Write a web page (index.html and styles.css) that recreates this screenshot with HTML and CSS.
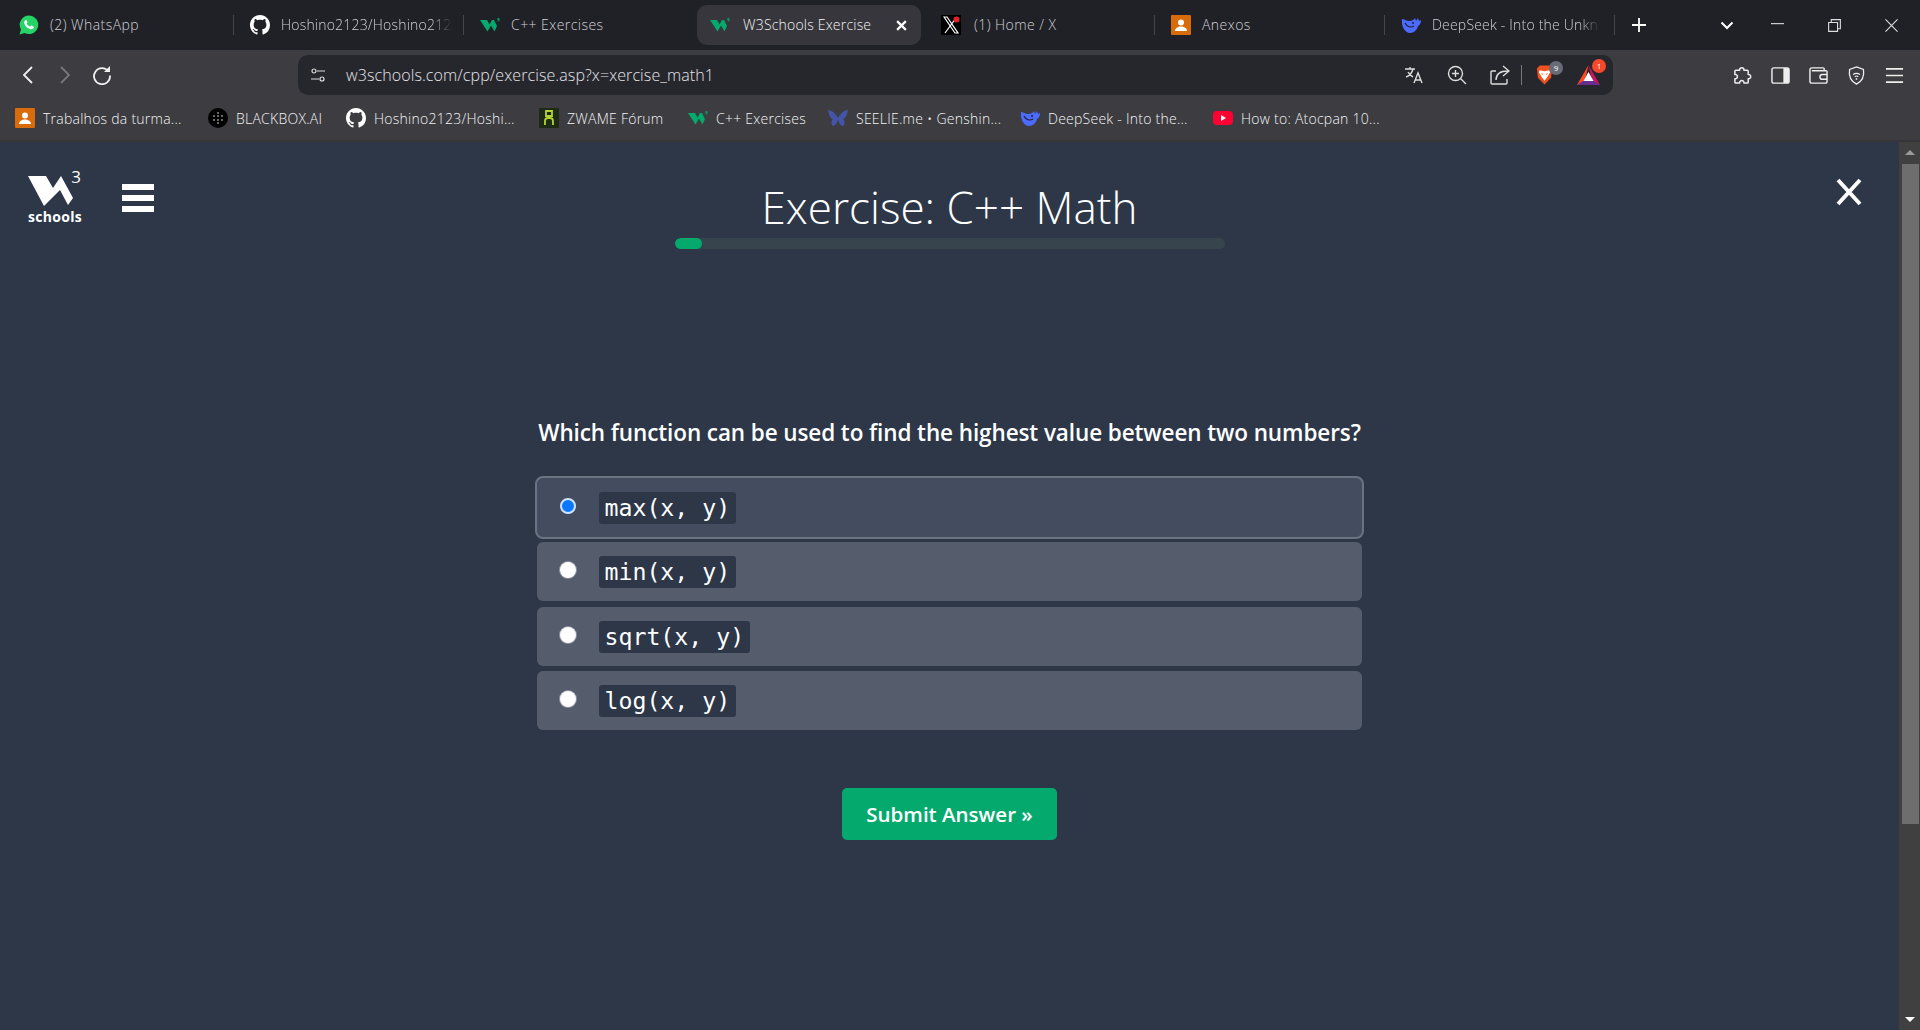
FILE: index.html
```html
<!DOCTYPE html>
<html lang="en">
<head>
<meta charset="UTF-8" />
<title>W3Schools Exercise</title>
<link rel="stylesheet" href="styles.css">
</head>
<body>
<svg class="defs" width="0" height="0">
  <symbol id="i-github" viewBox="0 0 16 16"><path fill="#fff" d="M8 0C3.58 0 0 3.58 0 8c0 3.54 2.29 6.53 5.47 7.59.4.07.55-.17.55-.38 0-.19-.01-.82-.01-1.49-2.01.37-2.53-.49-2.69-.94-.09-.23-.48-.94-.82-1.13-.28-.15-.68-.52-.01-.53.63-.01 1.08.58 1.23.82.72 1.21 1.87.87 2.33.66.07-.52.28-.87.51-1.07-1.78-.2-3.64-.89-3.64-3.95 0-.87.31-1.59.82-2.15-.08-.2-.36-1.02.08-2.12 0 0 .67-.21 2.2.82.64-.18 1.32-.27 2-.27s1.36.09 2 .27c1.53-1.04 2.2-.82 2.2-.82.44 1.1.16 1.92.08 2.12.51.56.82 1.27.82 2.15 0 3.07-1.87 3.75-3.65 3.95.29.25.54.73.54 1.48 0 1.07-.01 1.93-.01 2.2 0 .21.15.46.55.38A8.01 8.01 0 0 0 16 8c0-4.42-3.58-8-8-8z"/></symbol>
  <symbol id="i-w3" viewBox="0 0 20 16"><path fill="#04aa6d" d="M0 3h7l2.5 4.500L12 3h2l3 6-2.500 5.500-3.500-6-3.500 6z"/><path fill="#04aa6d" d="M17.500 1h2v.8h-1.200v.5h1.200v1.900h-2v-.7h1.200v-.5h-1.200z"/></symbol>
  <symbol id="i-person" viewBox="0 0 20 20"><rect width="20" height="20" rx="1" fill="#d96c0a"/><circle cx="10" cy="7.500" r="3" fill="#fff"/><path fill="#fff" d="M4 16c0-3 3-4.500 6-4.500s6 1.500 6 4.500z"/></symbol>
  <symbol id="i-whale" viewBox="0 0 20 20"><path fill="#4d6bfe" d="M1 4c2 0 4 2 7 2 3 0 5-1 6-3l1 3 2-3 1 3 2-1c0 3-1 5-3 6-1 4-4 7-8 7C4 18 0 11 1 4z"/><path fill="none" stroke="#202127" stroke-width="1.200" d="M4 8c2 4 6 5 9 3"/><circle cx="12" cy="8" r="1" fill="#202127"/></symbol>
</svg>

<div class="tab-strip">
  <div class="tab first">
    <svg class="fav" viewBox="0 0 20 20"><path fill="#25d366" d="M10 .5a9.300 9.300 0 0 0-8 14L.5 19.500l5.200-1.400A9.300 9.300 0 1 0 10 .5z"/><path fill="#fff" d="M7 5c-.5 0-1 .3-1.300.8C5 7 5 8.500 6 10c1.300 2 3.300 3.700 5.500 4.200 1.500.3 2.800-.5 3.200-1.500.2-.5.1-1-.3-1.200l-1.800-.9c-.4-.2-.7 0-.9.300l-.6.800c-1.500-.5-2.800-1.700-3.500-3.100l.6-.7c.2-.3.200-.6.100-.9l-.7-1.700C7.500 5.100 7.300 5 7 5z"/></svg>
    <span class="tab-text">(2) WhatsApp</span>
  </div>
  <div class="tab sep">
    <svg class="fav"><use href="#i-github"/></svg>
    <span class="tab-text fade">Hoshino2123/Hoshino212</span>
  </div>
  <div class="tab sep wide">
    <svg class="fav"><use href="#i-w3"/></svg>
    <span class="tab-text">C++ Exercises</span>
  </div>
  <div class="tab active">
    <svg class="fav"><use href="#i-w3"/></svg>
    <span class="tab-text">W3Schools Exercise</span>
    <svg class="tab-close" viewBox="0 0 10 10"><path d="M1 1l8 8M9 1L1 9" stroke="#fff" stroke-width="2"/></svg>
  </div>
  <div class="tab after-active">
    <svg class="fav" viewBox="0 0 20 20"><rect width="20" height="20" fill="#000"/><path d="M3 2l11 16h3L6 2zM15 3L4 18" stroke="#fff" stroke-width="1.200" fill="none"/><circle cx="15.500" cy="4.500" r="3" fill="#e8202a"/></svg>
    <span class="tab-text">(1) Home / X</span>
  </div>
  <div class="tab sep">
    <svg class="fav"><use href="#i-person"/></svg>
    <span class="tab-text">Anexos</span>
  </div>
  <div class="tab sep">
    <svg class="fav"><use href="#i-whale"/></svg>
    <span class="tab-text fade">DeepSeek - Into the Unkn</span>
  </div>
  <div class="strip-end">
    <svg class="new-tab" viewBox="0 0 14 14"><path d="M7 0v14M0 7h14" stroke="#fff" stroke-width="1.800"/></svg>
    <svg class="tab-list" viewBox="0 0 14 9"><path d="M1.500 1.500L7 7l5.500-5.500" stroke="#fff" stroke-width="2" fill="none"/></svg>
    <svg class="win-btn minimize" viewBox="0 0 14 14"><path d="M0 5h14" stroke="#ddd" stroke-width="1.200"/></svg>
    <svg class="win-btn" viewBox="0 0 14 14"><path d="M.7 3.700h9.600v9.600H.7zM3.500 3.500V.7h9.800v9.800h-3" stroke="#ddd" stroke-width="1.200" fill="none"/></svg>
    <svg class="win-btn" viewBox="0 0 14 14"><path d="M.5.500l13 13M13.500.5l-13 13" stroke="#ddd" stroke-width="1.200"/></svg>
  </div>
</div>

<div class="toolbar">
  <svg class="nav-btn" viewBox="0 0 12 20"><path d="M10 2L2 10l8 8" stroke="#f0f0f0" stroke-width="1.800" fill="none"/></svg>
  <svg class="nav-btn" viewBox="0 0 12 20"><path d="M2 2l8 8-8 8" stroke="#77777c" stroke-width="1.800" fill="none"/></svg>
  <svg class="nav-btn reload" viewBox="0 0 20 20"><path d="M16.500 6.500A8 8 0 1 0 18 10.500" stroke="#f0f0f0" stroke-width="1.800" fill="none"/><path d="M12 7h6V1z" fill="#f0f0f0"/></svg>
  <div class="url-bar">
    <svg class="site-info" viewBox="0 0 16 14"><g stroke="#ddd" stroke-width="1.200" fill="none"><circle cx="4" cy="3" r="2"/><path d="M7 3h8M1 11h8"/><circle cx="12" cy="11" r="2"/></g></svg>
    <span class="url">w3schools.com/cpp/exercise.asp?x=xercise_math1</span>
    <div class="url-icons">
      <svg class="url-ic" viewBox="0 0 20 20"><path d="M1 4h10M6 2v2M9 4c-1 4-4 7-7 8M4 7c1 2 3 4 5 5M10 18l4-10 4 10M11.500 15h5" stroke="#ddd" stroke-width="1.400" fill="none"/></svg>
      <svg class="url-ic" viewBox="0 0 20 20"><circle cx="8.500" cy="8.500" r="7" stroke="#ddd" stroke-width="1.400" fill="none"/><path d="M8.500 5v7M5 8.500h7M13.500 13.500L19 19" stroke="#ddd" stroke-width="1.400"/></svg>
      <svg class="url-ic" viewBox="0 0 20 20"><path d="M6 6H2a1 1 0 0 0-1 1v11a1 1 0 0 0 1 1h14a1 1 0 0 0 1-1v-4M6 15c0-6 4-9 12-9M13 1l6 5-6 5" stroke="#ddd" stroke-width="1.400" fill="none"/></svg>
      <span class="url-sep"></span>
      <div class="shield">
        <svg viewBox="0 0 18 22"><path fill="#f1501f" d="M4 1h10l3 3-1 10-7 7-7-7L1 4z"/><path fill="#fff" d="M4 6l5 1 5-1 1 2-3 5-3 4-3-4-3-5z"/><path fill="#f1501f" d="M5.500 9l2 1-1 1zM12.500 9l-2 1 1 1z"/></svg>
        <span class="badge badge-grey">9</span>
      </div>
      <div class="shield bat">
        <svg viewBox="0 0 23 20"><path fill="#ff4724" d="M11.500 0L0 20h7z"/><path fill="#c8155e" d="M11.500 0L23 20h-7z"/><path fill="#662d91" d="M0 20h23l-6-4H6z"/><path fill="#fff" d="M11.500 7l5 9h-10z"/></svg>
        <span class="badge badge-red">1</span>
      </div>
    </div>
  </div>
  <div class="tools">
    <svg class="tool" viewBox="0 0 20 20"><path d="M7 4.500C6.500 1 12 1 11.500 4.500h3.500a1 1 0 0 1 1 1V9c3.500-.5 3.500 5 0 4.500V17a1 1 0 0 1-1 1h-3.500c.5-3.500-5-3.500-4.500 0H3a1 1 0 0 1-1-1v-3.500c3.500.5 3.500-5 0-4.500V5.500a1 1 0 0 1 1-1z" stroke="#eee" stroke-width="1.600" fill="none" stroke-linejoin="round"/></svg>
    <svg class="tool" viewBox="0 0 20 20"><rect x="1" y="2" width="18" height="16" rx="2" stroke="#eee" stroke-width="1.500" fill="none"/><path d="M13 2h5a1 1 0 0 1 1 1v14a1 1 0 0 1-1 1h-5z" fill="#eee"/></svg>
    <svg class="tool" viewBox="0 0 20 20"><path d="M16 5V3a1 1 0 0 0-1-1H3a2 2 0 0 0-2 2v12a2 2 0 0 0 2 2h14a2 2 0 0 0 2-2V6a1 1 0 0 0-1-1H3M19 9h-5a2 2 0 0 0 0 5h5" stroke="#eee" stroke-width="1.500" fill="none"/></svg>
    <svg class="tool" viewBox="0 0 20 22"><path d="M10 1l8 3c1 6 0 13-8 17C2 17 1 10 2 4z" stroke="#eee" stroke-width="1.500" fill="none"/><path d="M6 10c2-2 6-2 8 0M8 12.500c1-1 3-1 4 0" stroke="#eee" stroke-width="1.400" fill="none"/><circle cx="10" cy="15" r="1" fill="#eee"/></svg>
    <svg class="tool" viewBox="0 0 20 20"><path d="M1 3h18M1 10h18M1 17h18" stroke="#eee" stroke-width="1.800"/></svg>
  </div>
</div>

<div class="bookmarks">
  <div class="bm"><svg class="fav"><use href="#i-person"/></svg>Trabalhos da turma...</div>
  <div class="bm"><svg class="fav" viewBox="0 0 20 20"><circle cx="10" cy="10" r="10" fill="#000"/><g fill="#888"><circle cx="10" cy="5" r="1"/><circle cx="10" cy="8" r="1"/><circle cx="10" cy="12" r="1"/><circle cx="10" cy="15" r="1"/><circle cx="6" cy="8" r="1"/><circle cx="14" cy="8" r="1"/><circle cx="6" cy="12" r="1"/><circle cx="14" cy="12" r="1"/></g></svg>BLACKBOX.AI</div>
  <div class="bm"><svg class="fav"><use href="#i-github"/></svg>Hoshino2123/Hoshi...</div>
  <div class="bm"><svg class="fav" viewBox="0 0 20 20"><rect width="20" height="20" fill="#1d2a14"/><path d="M7 3h6v5H7zM10 8v2M6 17v-4a3 3 0 0 1 3-3h2a3 3 0 0 1 3 3v4" stroke="#b5d334" stroke-width="1.800" fill="none"/></svg>ZWAME Fórum</div>
  <div class="bm"><svg class="fav"><use href="#i-w3"/></svg>C++ Exercises</div>
  <div class="bm"><svg class="fav" viewBox="0 0 20 20"><path fill="#4455a8" d="M0 2c4 0 8 4 10 8 2-4 6-8 10-8-1 5-2 8-5 9 2 1 2 6 0 7-2 0-4-3-5-6-1 3-3 6-5 6-2-1-2-6 0-7C2 10 1 7 0 2z"/></svg>SEELIE.me • Genshin...</div>
  <div class="bm"><svg class="fav"><use href="#i-whale"/></svg>DeepSeek - Into the...</div>
  <div class="bm"><svg class="fav" viewBox="0 0 20 20"><rect y="3" width="20" height="14" rx="4" fill="#ff0033"/><path d="M8 7l5 3-5 3z" fill="#fff"/></svg>How to: Atocpan 10...</div>
</div>

<div class="viewport">
  <main class="page">
    <header class="top">
      <div class="brand">
        <div class="logo">
          <svg class="logo-mark" viewBox="0 0 53 34"><path fill="#fff" d="M0 4h18l7 12 8-12 12 22-5 7-8-15-16 16z"/></svg>
          <span class="logo-three">3</span>
          <span class="logo-word">schools</span>
        </div>
        <div class="menu"><span></span><span></span><span></span></div>
      </div>
      <div class="heading">
        <h1>Exercise: C++ Math</h1>
        <div class="progress"><div class="progress-fill" style="width:5%"></div></div>
      </div>
      <svg class="close" viewBox="0 0 26 28"><path d="M2 2l22 24M24 2L2 26" stroke="#fff" stroke-width="4"/></svg>
    </header>

    <section class="quiz">
      <p class="question">Which function can be used to find the highest value between two numbers?</p>
      <div class="options">
        <label class="option selected"><span class="radio"></span><code>max(x, y)</code></label>
        <label class="option"><span class="radio"></span><code>min(x, y)</code></label>
        <label class="option"><span class="radio"></span><code>sqrt(x, y)</code></label>
        <label class="option"><span class="radio"></span><code>log(x, y)</code></label>
      </div>
      <button class="submit">Submit Answer »</button>
    </section>
  </main>
  <div class="scrollbar">
    <div class="arrow up"></div>
    <div class="thumb"></div>
    <div class="arrow down"></div>
  </div>
</div>
</body>
</html>
```
FILE: styles.css
```css
* {
  box-sizing: border-box;
}
html, body {
  height: 100%;
}
body {
  margin: 0;
  overflow: hidden;
  display: flex;
  flex-direction: column;
  font-family: "Open Sans", "Noto Sans", sans-serif;
  background-color: #2d3748;
  color: #fff;
}
.defs {
  position: absolute;
}
.fav {
  width: 20px;
  height: 20px;
  flex-shrink: 0;
}

/* tabs */
.tab-strip {
  height: 50px;
  background-color: #202127;
  display: flex;
  align-items: center;
}
.tab {
  position: relative;
  width: 230px;
  height: 40px;
  flex-shrink: 0;
  display: flex;
  align-items: center;
  gap: 11px;
  padding-left: 17px;
  font-size: 14px;
  font-weight: 300;
  letter-spacing: 0.45px;
  color: #d0d0d4;
  white-space: nowrap;
}
.tab.sep::before {
  content: "";
  position: absolute;
  left: 0;
  top: 10px;
  height: 20px;
  width: 1px;
  background-color: #45454b;
}
.tab.first {
  width: 233px;
  padding-left: 19px;
}
.tab.wide {
  width: 234px;
}
.tab.active {
  width: 224px;
  background-color: #36363c;
  border-radius: 10px;
  color: #f5f5f5;
  padding-left: 13px;
  gap: 13px;
  letter-spacing: 0.2px;
}
.tab.after-active {
  width: 233px;
  padding-left: 20px;
  gap: 13px;
}
.tab-text {
  flex: 1;
  padding-bottom: 1px;
}
.tab-text.fade {
  -webkit-mask-image: linear-gradient(to right, #000 88%, transparent 100%);
  margin-right: 14px;
  letter-spacing: 0.2px;
}
.tab-close {
  width: 11px;
  height: 11px;
  margin-right: 14px;
  flex-shrink: 0;
}
.strip-end {
  flex: 1;
  display: flex;
  align-items: center;
  border-left: 1px solid #45454b;
  height: 20px;
}
.new-tab {
  width: 14px;
  height: 14px;
  margin-left: 17px;
}
.tab-list {
  width: 14px;
  height: 9px;
  margin-left: 74px;
}
.win-btn {
  width: 13px;
  height: 13px;
  margin-left: 44px;
}
.win-btn.minimize {
  margin-left: 37px;
}

/* toolbar */
.toolbar {
  height: 45px;
  background-color: #3c3c41;
  display: flex;
  align-items: center;
  padding-top: 5px;
}
.nav-btn {
  width: 12px;
  height: 20px;
  margin-left: 22px;
}
.nav-btn + .nav-btn {
  margin-left: 25px;
}
.nav-btn.reload {
  width: 20px;
  margin-left: 21px;
}
.url-bar {
  width: 1315px;
  height: 40px;
  margin-left: 186px;
  background-color: #26272d;
  border-radius: 10px;
  display: flex;
  align-items: center;
  padding: 0 13px 0 12px;
}
.site-info {
  width: 16px;
  height: 14px;
}
.url {
  margin-left: 20px;
  font-size: 16px;
  font-weight: 300;
  color: #e4e4e8;
  letter-spacing: 0.1px;
}
.url-icons {
  margin-left: auto;
  display: flex;
  align-items: center;
}
.url-ic {
  width: 20px;
  height: 20px;
  margin-right: 23px;
}
.url-sep {
  width: 1px;
  height: 20px;
  background-color: #77777c;
  margin-left: -12px;
  margin-right: 14px;
}
.shield {
  position: relative;
  width: 17px;
  height: 22px;
  margin-right: 24px;
}
.shield svg {
  width: 100%;
  height: 100%;
  display: block;
}
.shield.bat {
  width: 23px;
  height: 20px;
  margin-right: 0;
}
.badge {
  position: absolute;
  width: 14px;
  height: 14px;
  border-radius: 50%;
  font-size: 8px;
  line-height: 14px;
  text-align: center;
}
.badge-grey {
  background-color: #686c78;
  right: -10px;
  top: -3px;
}
.badge-red {
  background-color: #f5492d;
  right: -6px;
  top: -6px;
}
.tools {
  display: flex;
  align-items: center;
  gap: 19px;
  margin-left: 120px;
}
.tool {
  width: 19px;
  height: 19px;
}

/* bookmarks */
.bookmarks {
  height: 47px;
  background-color: #3c3c41;
  border-bottom: 2px solid #35353a;
  display: grid;
  grid-template-columns: 193px 138px 193px 149px 140px 192px 193px auto;
  align-items: center;
  padding: 1px 0 0 15px;
  font-size: 14px;
  font-weight: 300;
  letter-spacing: 0.25px;
  color: #f4f4f4;
}
.bm {
  display: flex;
  align-items: center;
  gap: 8px;
  white-space: nowrap;
}

/* page */
.viewport {
  flex: 1;
  display: flex;
  min-height: 0;
}
.page {
  flex: 1;
  display: flex;
  flex-direction: column;
}
.top {
  display: grid;
  grid-template-columns: 1fr 550px 1fr;
  padding-top: 30px;
}
.brand {
  display: flex;
  align-items: flex-start;
  padding-left: 28px;
}
.logo {
  position: relative;
  width: 53px;
  height: 50px;
}
.logo-mark {
  width: 53px;
  height: 34px;
  display: block;
}
.logo-three {
  position: absolute;
  right: 0;
  top: -5px;
  font-size: 17px;
  line-height: 20px;
}
.logo-word {
  display: block;
  font-size: 14px;
  font-weight: 700;
  letter-spacing: 0.3px;
  line-height: 16px;
  margin-top: 3px;
}
.menu {
  margin-left: 41px;
  margin-top: 12px;
  width: 32px;
  display: flex;
  flex-direction: column;
  gap: 5px;
}
.menu span {
  height: 6px;
  background-color: #fff;
}
.heading {
  text-align: center;
}
h1 {
  margin: 13px 0 0;
  font-size: 44px;
  font-weight: 300;
  line-height: 44px;
}
.progress {
  height: 11px;
  background-color: #38444d;
  border-radius: 6px;
  overflow: hidden;
  margin-top: 9px;
}
.progress-fill {
  height: 100%;
  background-color: #04aa6d;
  border-radius: 6px;
}
.close {
  width: 26px;
  height: 28px;
  justify-self: end;
  margin-right: 37px;
  margin-top: 6px;
}
.quiz {
  width: 829px;
  margin: 0 auto;
  display: flex;
  flex-direction: column;
  align-items: center;
}
.question {
  margin: 168px 0 0;
  font-size: 22.5px;
  font-weight: 600;
  letter-spacing: -0.1px;
  line-height: 32px;
  white-space: nowrap;
}
.options {
  width: 100%;
  margin-top: 27px;
  display: flex;
  flex-direction: column;
  gap: 5.5px;
  padding: 0 2px;
}
.option {
  height: 59px;
  background-color: #555d6d;
  border-radius: 6px;
  display: flex;
  align-items: center;
  padding-left: 23px;
}
.option.selected {
  height: 63px;
  margin: 0 -2px -2.5px;
  padding-left: 23px;
  background-color: #434d5f;
  border: 2px solid #6b7382;
  border-radius: 8px;
}
.radio {
  width: 16px;
  height: 16px;
  border-radius: 50%;
  background-color: #fff;
  box-shadow: 0 0 0 1px rgba(255, 255, 255, 0.35);
  margin-top: -3px;
}
.option.selected .radio {
  background-color: #0b76ff;
  border: 2px solid #cfe3ff;
  box-shadow: none;
}
code {
  margin-left: 23px;
  padding: 0 5.5px;
  height: 32px;
  line-height: 32px;
  background-color: #2d3748;
  border-radius: 3px;
  font-family: "DejaVu Sans Mono", monospace;
  font-size: 23.2px;
  margin-top: 1px;
}
.submit {
  margin-top: 58px;
  width: 215px;
  height: 52px;
  background-color: #04aa6d;
  border: none;
  border-radius: 5px;
  color: #fff;
  font-family: inherit;
  font-size: 20.5px;
  font-weight: 600;
}
.scrollbar {
  width: 21px;
  background-color: #404040;
  display: flex;
  flex-direction: column;
  align-items: center;
  padding-left: 1px;
}
.arrow {
  width: 0;
  height: 0;
  border-left: 5px solid transparent;
  border-right: 5px solid transparent;
}
.arrow.up {
  border-bottom: 5px solid #9b9b9b;
  margin: 8px 0 9px;
}
.arrow.down {
  border-top: 5px solid #fff;
  margin: auto 0 8px;
}
.thumb {
  width: 17px;
  height: 660px;
  background-color: #6e6e6e;
}
```
